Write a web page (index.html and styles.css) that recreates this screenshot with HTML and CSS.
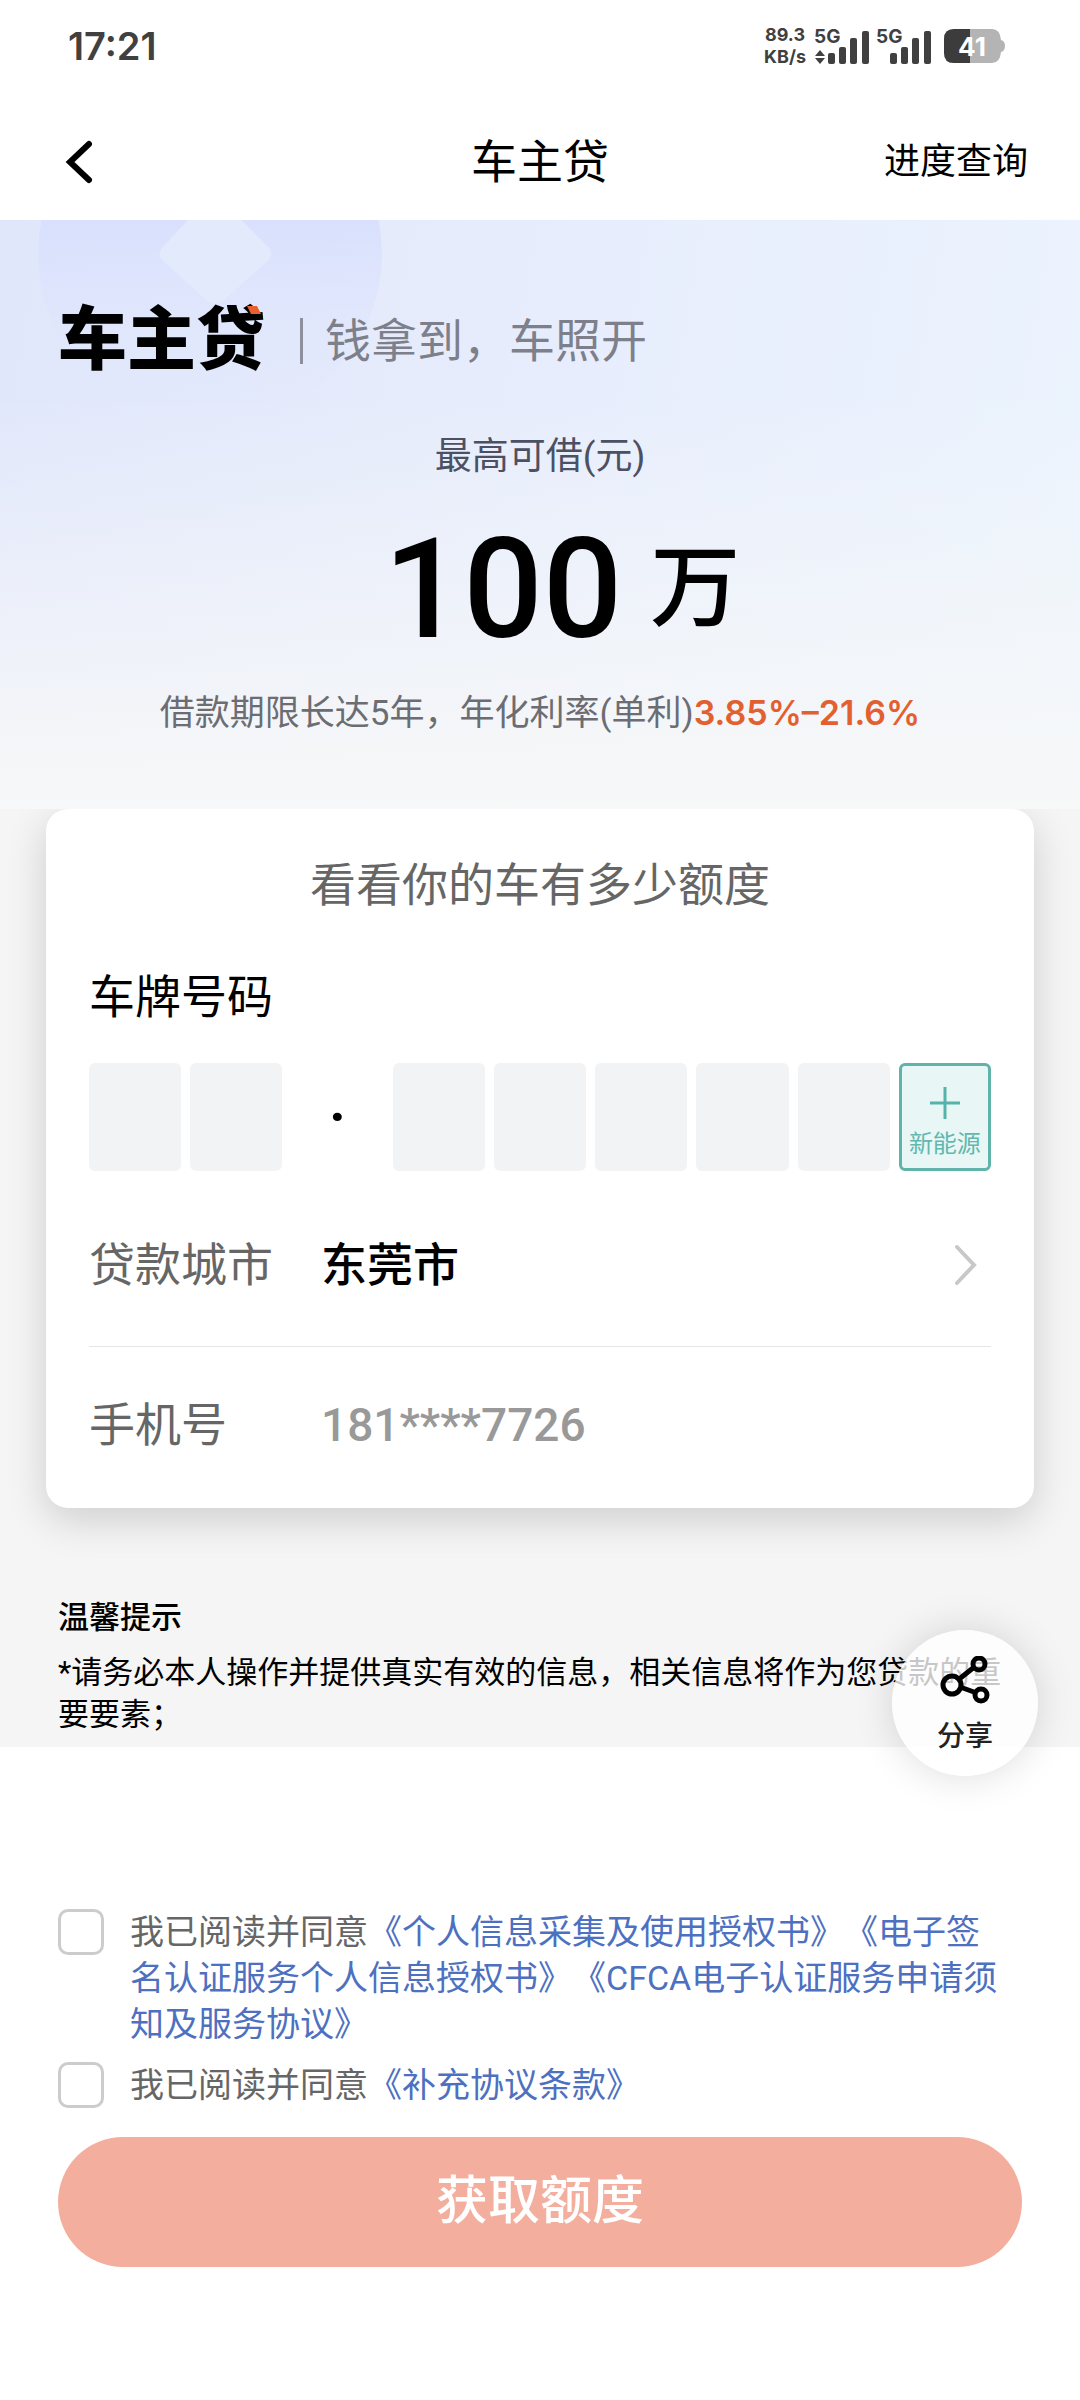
FILE: index.html
```html
<!DOCTYPE html>
<html lang="zh-CN">
<head>
<meta charset="utf-8">
<meta name="viewport" content="width=device-width, initial-scale=1">
<title>车主贷</title>
<link rel="stylesheet" href="styles.css">
</head>
<body>
<div class="status">
  <span class="clock">17:21</span>
  <div class="status-right">
    <div class="speed"><span>89.3</span><span>KB/s</span></div>
    <svg class="signals" width="118" height="38" viewBox="0 0 118 38" fill="#404040" aria-hidden="true">
      <text x="0" y="16" class="net">5G</text>
      <path d="M6 23l5 6H1zM6 37l5-6H1z"/>
      <rect x="14" y="26" width="7" height="11" rx="2"/>
      <rect x="25" y="20" width="7" height="17" rx="2"/>
      <rect x="36" y="11" width="7" height="26" rx="2"/>
      <rect x="48" y="4" width="7" height="33" rx="2"/>
      <text x="62" y="16" class="net">5G</text>
      <rect x="76" y="26" width="7" height="11" rx="2"/>
      <rect x="87" y="20" width="7" height="17" rx="2"/>
      <rect x="98" y="11" width="7" height="26" rx="2"/>
      <rect x="110" y="4" width="7" height="33" rx="2"/>
    </svg>
    <svg class="battery" width="62" height="34" viewBox="0 0 62 34" aria-hidden="true">
      <path d="M10 0H48Q56 0 57 11Q61 12 61 17Q61 22 57 23Q56 34 48 34H10Q0 34 0 24V10Q0 0 10 0Z" fill="#b4b4b4"/>
      <path d="M10 0H26V34H10Q0 34 0 24V10Q0 0 10 0Z" fill="#3c3c3c"/>
      <text x="28" y="27" class="level">41</text>
    </svg>
  </div>
</div>

<header class="nav">
  <button class="back" type="button" aria-label="返回">
    <svg width="30" height="44" viewBox="0 0 30 44" fill="none" stroke="#000" stroke-width="6" stroke-linecap="round"><path d="M25 4L6 22L25 40"/></svg>
  </button>
  <h1 class="nav-title">车主贷</h1>
  <a class="nav-link" href="#progress">进度查询</a>
</header>

<main>
  <section class="hero">
    <svg class="hero-art" width="440" height="260" viewBox="0 0 440 260" aria-hidden="true">
      <defs>
        <linearGradient id="disc" x1="0" y1="0" x2="0" y2="1">
          <stop offset="0.4" stop-color="#d9e0fd"/>
          <stop offset="1" stop-color="#e2e8fc" stop-opacity="0"/>
        </linearGradient>
      </defs>
      <circle cx="210" cy="34" r="172" fill="url(#disc)"/>
      <path d="M188 0H241L269 28Q273 34 269 40L224 80Q215 88 206 80L162 40Q157 34 162 28Z" fill="#e3eafc"/>
    </svg>
    <div class="brand">
      <span class="logo">车主贷<svg class="logo-mark" width="14" height="8" viewBox="0 0 14 8" aria-hidden="true"><path d="M0 0H10L14 8H4Z" fill="#e8602f"/></svg></span>
      <span class="slogan">钱拿到，车照开</span>
    </div>
    <p class="max-label">最高可借(元)</p>
    <p class="amount"><span class="amount-num">100</span><span class="amount-unit">万</span></p>
    <p class="terms">借款期限长达5年，年化利率(单利)<strong class="rate">3.85%–21.6%</strong></p>
  </section>

  <section class="apply">
    <form class="card">
      <h2 class="card-title">看看你的车有多少额度</h2>
      <div class="plate-label" id="plate-label">车牌号码</div>
      <div class="plate" role="group" aria-labelledby="plate-label">
        <input class="cell" maxlength="1" aria-label="车牌第1位">
        <input class="cell" maxlength="1" aria-label="车牌第2位">
        <span class="dot">·</span>
        <input class="cell" maxlength="1" aria-label="车牌第3位">
        <input class="cell" maxlength="1" aria-label="车牌第4位">
        <input class="cell" maxlength="1" aria-label="车牌第5位">
        <input class="cell" maxlength="1" aria-label="车牌第6位">
        <input class="cell" maxlength="1" aria-label="车牌第7位">
        <button class="energy" type="button">
          <svg width="30" height="32" viewBox="0 0 30 32" stroke="#55b3aa" stroke-width="3"><path d="M15 0V32M0 16H30"/></svg>
          <span>新能源</span>
        </button>
      </div>
      <button class="row city" type="button">
        <span class="row-label">贷款城市</span>
        <span class="row-value">东莞市</span>
        <svg class="chevron" width="24" height="42" viewBox="0 0 24 42" fill="none" stroke="#c8c8c8" stroke-width="4" stroke-linecap="round"><path d="M3 3L20 21L3 39"/></svg>
      </button>
      <div class="row phone">
        <label class="row-label" for="phone">手机号</label>
        <input class="row-input" id="phone" type="tel" value="181****7726" readonly>
      </div>
    </form>
    <div class="tips">
      <h3 class="tips-title">温馨提示</h3>
      <p class="tips-text">*请务必本人操作并提供真实有效的信息，相关信息将作为您贷款的重要要素；</p>
    </div>
  </section>
</main>

<footer class="footer">
  <button class="share" type="button">
    <svg width="50" height="50" viewBox="0 0 50 50" fill="none" stroke="#000" stroke-width="5" aria-hidden="true">
      <path d="M18 24L33 12M20 31L34 36"/>
      <circle cx="39" cy="8" r="6"/><circle cx="12" cy="29" r="9"/><circle cx="41" cy="39" r="6"/>
    </svg>
    <span>分享</span>
  </button>
  <div class="agree">
    <input class="check" type="checkbox" id="agree-main">
    <p class="agree-text"><label for="agree-main">我已阅读并同意</label><a href="#auth">《个人信息采集及使用授权书》</a><a href="#sign">《电子签名认证服务个人信息授权书》</a><a href="#cfca">《CFCA电子认证服务申请须知及服务协议》</a></p>
  </div>
  <div class="agree">
    <input class="check" type="checkbox" id="agree-extra">
    <p class="agree-text"><label for="agree-extra">我已阅读并同意</label><a href="#extra">《补充协议条款》</a></p>
  </div>
  <button class="submit" type="button">获取额度</button>
</footer>
</body>
</html>
```
FILE: styles.css
```css
* { box-sizing: border-box; margin: 0; padding: 0; }

body {
  background: #fff;
  color: #000;
  font-family: Roboto, "Noto Sans CJK SC", sans-serif;
  font-weight: 400;
  text-spacing-trim: space-all;
}

button, input { font: inherit; color: inherit; border: 0; background: none; }
button { cursor: pointer; }
a { color: inherit; text-decoration: none; }
h1, h2, h3 { font-weight: 400; }

/* status bar */
.status {
  display: flex;
  align-items: center;
  justify-content: space-between;
  height: 92px;
  padding: 0 74px 0 68px;
  color: #404040;
  font-family: Inter, sans-serif;
}
.clock { font-size: 38px; font-weight: 600; }
.status-right { display: flex; align-items: center; gap: 12px; }
.speed {
  display: flex;
  flex-direction: column;
  align-items: center;
  font-size: 18px;
  font-weight: 700;
  line-height: 22px;
}
.signals { margin-left: -4px; }
.net { font: 700 19px Inter, sans-serif; }
.level { font: 700 26px Inter, sans-serif; fill: #fff; text-anchor: middle; }

/* navigation */
.nav {
  display: grid;
  grid-template-columns: 1fr auto 1fr;
  align-items: center;
  height: 128px;
  padding: 12px 52px 0;
}
.back { justify-self: start; display: flex; padding-left: 12px; }
.nav-title { font-size: 46px; line-height: 64px; }
.nav-link { justify-self: end; font-size: 36px; line-height: 50px; }

/* hero */
.hero {
  position: relative;
  padding: 76px 58px 70px;
  background:
    linear-gradient(180deg, rgba(247, 248, 248, 0) 30%, #f7f8f8 100%),
    linear-gradient(100deg, #e1e7fb 0%, #e7edfc 50%, #ecf4fe 100%);
  text-align: center;
}
.hero-art { position: absolute; left: 0; top: 0; }
.brand { position: relative; display: flex; align-items: center; height: 90px; }
.logo { position: relative; font-size: 69px; font-weight: 900; line-height: 90px; }
.logo-mark { position: absolute; right: 4px; top: 10px; }
.slogan {
  margin-left: 35px;
  padding-left: 22px;
  border-left: 3px solid #8d909c;
  color: #7d808a;
  font-size: 46px;
  line-height: 46px;
}
.max-label { margin-top: 44px; color: #4c5063; font-size: 37px; line-height: 54px; }
.amount {
  display: flex;
  align-items: center;
  justify-content: center;
  gap: 28px;
  height: 140px;
  margin-top: 35px;
  padding-left: 44px;
  line-height: 140px;
}
.amount-num { font-size: 140px; font-weight: 500; }
.amount-unit { font-size: 90px; font-weight: 500; }
.terms { margin-top: 29px; color: #6b6d73; font-size: 35px; line-height: 50px; }
.rate { color: #e2602f; font-family: Inter, sans-serif; font-size: 34px; font-weight: 600; }

/* application card */
.apply { padding: 0 46px 11px; background: #f5f5f5; overflow: hidden; }
.card {
  padding: 43px 43px 5px;
  border-radius: 22px;
  background: #fff;
  box-shadow: 0 12px 40px rgba(0, 0, 0, 0.16);
}
.card-title { color: #666; font-size: 46px; line-height: 66px; text-align: center; }
.plate-label { margin-top: 46px; font-size: 46px; line-height: 66px; }
.plate {
  display: grid;
  grid-template-columns: repeat(9, minmax(0, 1fr));
  gap: 9px;
  height: 108px;
  margin: 33px 0 13px;
}
.cell { min-width: 0; border-radius: 6px; background: #f2f3f5; font-size: 46px; text-align: center; }
.dot { font-size: 56px; font-weight: 700; line-height: 108px; text-align: center; }
.energy {
  display: flex;
  flex-direction: column;
  align-items: center;
  justify-content: center;
  gap: 9px;
  padding-top: 12px;
  border: 3px solid #60b3a8;
  border-radius: 6px;
  background: #e8f6f5;
  color: #60b8ae;
  font-size: 24px;
  line-height: 32px;
}
.row { display: flex; align-items: center; width: 100%; font-size: 46px; line-height: 66px; text-align: left; }
.row-label { width: 232px; color: #666; }
.row-value { flex: 1; font-weight: 500; }
.city { height: 163px; border-bottom: 1px solid #e6e6e6; }
.chevron { margin-right: 13px; }
.phone { height: 156px; }
.row-input { flex: 1; min-width: 0; color: #999; font-weight: 500; outline: 0; }

.tips { padding: 89px 12px 0; font-size: 31px; line-height: 42px; }
.tips-title { margin-bottom: 13px; font-size: 31px; font-weight: 500; }

/* agreements and submit */
.footer { position: relative; padding: 162px 58px 134px; }
.share {
  position: absolute;
  top: -117px;
  right: 42px;
  display: flex;
  flex-direction: column;
  align-items: center;
  gap: 10px;
  width: 146px;
  height: 146px;
  padding-top: 26px;
  border-radius: 50%;
  background: rgba(255, 255, 255, 0.78);
  box-shadow: 0 0 40px rgba(0, 0, 0, 0.14);
  color: #222;
  font-size: 28px;
  font-weight: 500;
  line-height: 42px;
}
.agree { display: flex; align-items: flex-start; gap: 26px; margin-bottom: 15px; }
.check {
  flex: none;
  appearance: none;
  width: 46px;
  height: 46px;
  border: 3px solid #ccc;
  border-radius: 10px;
  background: #fff;
}
.agree-text { flex: 1; padding-right: 12px; color: #666; font-size: 34px; line-height: 46px; word-break: break-all; }
.agree-text a { color: #4d70c0; }
.submit {
  display: block;
  width: 100%;
  margin-top: 29px;
  border-radius: 65px;
  background: #f3ae9d;
  color: #fff;
  font-size: 52px;
  font-weight: 500;
  line-height: 130px;
}
```
